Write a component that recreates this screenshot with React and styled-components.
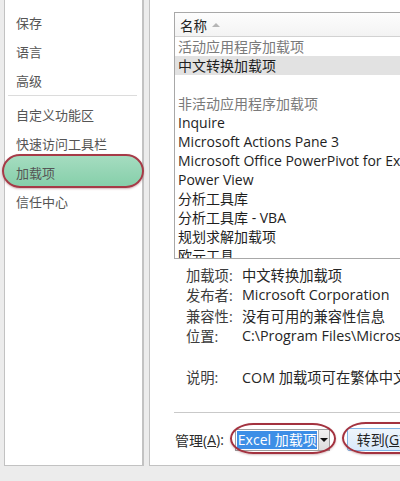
import React from "react";
import styled, { createGlobalStyle } from "styled-components";

const GlobalStyle = createGlobalStyle`
  body {
    margin: 0;
    background: #ececec;
  }
`;

const FONT = `"Open Sans", "Noto Sans CJK SC", sans-serif`;

const Frame = styled.div`
  width: 400px;
  height: 481px;
  overflow: hidden;
  background: #ececec;
  font-family: ${FONT};
  display: flex;
  flex-direction: column;
`;

const Panes = styled.div`
  height: 466px;
  display: flex;
  gap: 5px;
  padding-left: 4px;
  box-sizing: border-box;
`;

const SidePanel = styled.div`
  width: 140px;
  flex: none;
  background: #fff;
  border: 1px solid #c2c2c2;
  border-top: none;
  border-right: 2px solid #c2c2c2;
  box-sizing: border-box;
  padding-top: 8px;
`;

const NavItem = styled.div`
  position: relative;
  height: 29px;
  display: flex;
  align-items: center;
  padding-left: 11px;
  font-size: 13px;
  color: #555;
  font-family: "Noto Sans CJK SC", sans-serif;

  ${(p) =>
    p.$active &&
    `
    &::before {
      content: "";
      position: absolute;
      left: -3px;
      right: -2px;
      top: -4px;
      bottom: -1px;
      border-radius: 18px / 17px;
      border: 2px solid #a63a47;
      background: linear-gradient(#a5dcc0, #86cfaa);
      box-shadow: 0 1px 2px rgba(120, 40, 50, 0.35);
    }
  `}
`;

const NavLabel = styled.span`
  position: relative;
`;

const NavRule = styled.div`
  height: 1px;
  background: #dcdcdc;
  margin: 0 5px 4px 3px;
`;

const MainPanel = styled.div`
  flex: 1;
  min-width: 0;
  background: #fff;
  border-left: 1px solid #c2c2c2;
  border-bottom: 1px solid #c2c2c2;
  box-sizing: border-box;
  padding: 12px 0 0 24px;
  overflow: hidden;
`;

const ListBox = styled.div`
  width: 260px;
  height: 247px;
  border: 1px solid #a8a8a8;
  border-right: none;
  box-sizing: border-box;
  overflow: hidden;
`;

const ListHeader = styled.div`
  height: 23px;
  display: flex;
  align-items: center;
  gap: 5px;
  padding-left: 5px;
  border-bottom: 1px solid #d2d2d2;
  background: linear-gradient(#fdfdfd, #f3f3f3);
  font-size: 13.5px;
  color: #222;
`;

const SortMark = styled.span`
  width: 0;
  height: 0;
  border-left: 4px solid transparent;
  border-right: 4px solid transparent;
  border-bottom: 4px solid #b5b5b5;
`;

const Row = styled.div`
  height: 19px;
  line-height: 19px;
  padding-left: 3px;
  font-size: 14px;
  white-space: nowrap;
  color: ${(p) => (p.$group ? "#7a7a7a" : "#1e1e1e")};
  background: ${(p) => (p.$selected ? "#e2e2e2" : "transparent")};
`;

const Details = styled.div`
  display: grid;
  grid-template-columns: 56px 1fr;
  grid-auto-rows: 20.5px;
  align-items: center;
  margin: 5px 0 0 12px;
  font-size: 14.3px;
  white-space: nowrap;
`;

const Label = styled.span`
  color: #3c3c3c;
`;

const Value = styled.span`
  color: #262626;
`;

const Rule = styled.div`
  height: 1px;
  background: #c9c9c9;
  margin-top: 25px;
`;

const ManageBar = styled.div`
  display: flex;
  align-items: center;
  margin-top: 15px;
  padding-left: 1px;
  font-size: 14px;
  color: #2a2a2a;
  white-space: nowrap;
`;

const Key = styled.span`
  text-decoration: underline;
`;

const Circled = styled.div`
  position: relative;
  margin-left: ${(p) => p.$gap}px;

  &::after {
    content: "";
    position: absolute;
    left: -5px;
    right: -6px;
    top: -6px;
    bottom: -3px;
    border: 2px solid #a3323f;
    border-radius: 24px / 16px;
    box-shadow: 0 1px 2px rgba(120, 40, 50, 0.3);
    pointer-events: none;
  }
`;

const Select = styled.div`
  width: 95px;
  height: 22px;
  display: flex;
  border: 1px solid #9e9e9e;
  box-sizing: border-box;
  background: #fff;
`;

const SelectText = styled.span`
  flex: 1;
  margin: 1px;
  background: #3d8ee6;
  color: #fff;
  font-size: 14px;
  line-height: 18px;
  padding-left: 1px;
`;

const Arrow = styled.span`
  width: 15px;
  display: flex;
  align-items: center;
  justify-content: center;
  background: linear-gradient(#f2f2f2, #dcdcdc);
  border-left: 1px solid #b0b0b0;

  &::before {
    content: "";
    border-left: 4px solid transparent;
    border-right: 4px solid transparent;
    border-top: 4px solid #111;
  }
`;

const GoButton = styled.div`
  width: 80px;
  height: 23px;
  box-sizing: border-box;
  border: 1px solid #82b5e5;
  border-radius: 2px;
  background: linear-gradient(#eef5fc, #d9eafb);
  padding-left: 9px;
  line-height: 21px;
  font-size: 14px;
  color: #222;
`;

const BottomBand = styled.div`
  flex: 1;
  background: #ececec;
`;

const navTop = ["保存", "语言", "高级"];
const navBottom = ["自定义功能区", "快速访问工具栏", "加载项", "信任中心"];

const rows = [
  { text: "活动应用程序加载项", group: true },
  { text: "中文转换加载项", selected: true },
  { text: "" },
  { text: "非活动应用程序加载项", group: true },
  { text: "Inquire" },
  { text: "Microsoft Actions Pane 3" },
  { text: "Microsoft Office PowerPivot for Excel 2013" },
  { text: "Power View" },
  { text: "分析工具库" },
  { text: "分析工具库 - VBA" },
  { text: "规划求解加载项" },
  { text: "欧元工具" },
];

const details = [
  ["加载项:", "中文转换加载项"],
  ["发布者:", "Microsoft Corporation"],
  ["兼容性:", "没有可用的兼容性信息"],
  ["位置:", "C:\\Program Files\\Microsoft Office\\Office15"],
  ["", ""],
  ["说明:", "COM 加载项可在繁体中文和简体中文之间转换"],
];

export default function App() {
  return (
    <>
      <GlobalStyle />
      <Frame>
        <Panes>
          <SidePanel>
            {navTop.map((t) => (
              <NavItem key={t}>
                <NavLabel>{t}</NavLabel>
              </NavItem>
            ))}
            <NavRule />
            {navBottom.map((t) => (
              <NavItem key={t} $active={t === "加载项"}>
                <NavLabel>{t}</NavLabel>
              </NavItem>
            ))}
          </SidePanel>
          <MainPanel>
            <ListBox>
              <ListHeader>
                名称 <SortMark />
              </ListHeader>
              {rows.map((r, i) => (
                <Row key={i} $group={r.group} $selected={r.selected}>
                  {r.text || "\u00a0"}
                </Row>
              ))}
            </ListBox>
            <Details>
              {details.map(([l, v], i) => (
                <React.Fragment key={i}>
                  <Label>{l}</Label>
                  <Value>{v}</Value>
                </React.Fragment>
              ))}
            </Details>
            <Rule />
            <ManageBar>
              管理(<Key>A</Key>):
              <Circled $gap={11}>
                <Select>
                  <SelectText>Excel 加载项</SelectText>
                  <Arrow />
                </Select>
              </Circled>
              <Circled $gap={17}>
                <GoButton>
                  转到(<Key>G</Key>)
                </GoButton>
              </Circled>
            </ManageBar>
          </MainPanel>
        </Panes>
        <BottomBand />
      </Frame>
    </>
  );
}
